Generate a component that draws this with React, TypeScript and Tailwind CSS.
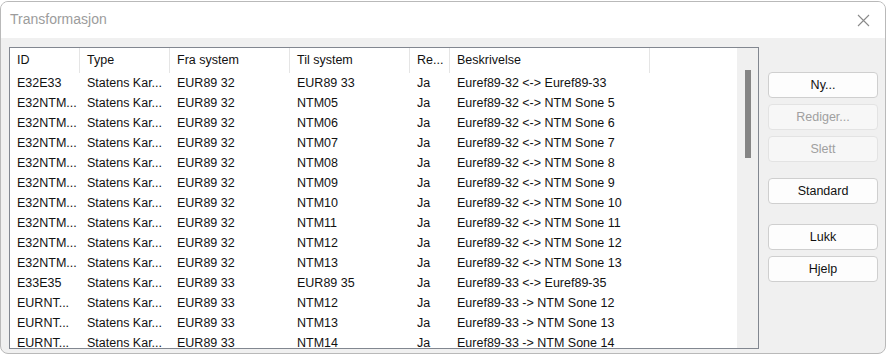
const cols = [
  { key: "id", label: "ID", w: 70 },
  { key: "type", label: "Type", w: 90 },
  { key: "fra", label: "Fra system", w: 120 },
  { key: "til", label: "Til system", w: 120 },
  { key: "rev", label: "Re...", w: 40 },
  { key: "desc", label: "Beskrivelse", w: 200 },
] as const;

type Row = { id: string; type: string; fra: string; til: string; rev: string; desc: string };

const rows: Row[] = [
  { id: "E32E33", type: "Statens Kar...", fra: "EUR89 32", til: "EUR89 33", rev: "Ja", desc: "Euref89-32 <-> Euref89-33" },
  ...[5, 6, 7, 8, 9, 10, 11, 12, 13].map((n) => ({
    id: "E32NTM...",
    type: "Statens Kar...",
    fra: "EUR89 32",
    til: "NTM" + String(n).padStart(2, "0"),
    rev: "Ja",
    desc: "Euref89-32 <-> NTM Sone " + n,
  })),
  { id: "E33E35", type: "Statens Kar...", fra: "EUR89 33", til: "EUR89 35", rev: "Ja", desc: "Euref89-33 <-> Euref89-35" },
  ...[12, 13, 14].map((n) => ({
    id: "EURNT...",
    type: "Statens Kar...",
    fra: "EUR89 33",
    til: "NTM" + n,
    rev: "Ja",
    desc: "Euref89-33 -> NTM Sone " + n,
  })),
];

const Btn = ({ label, disabled, className }: { label: string; disabled?: boolean; className?: string }) => (
  <button
    className={
      "w-[110px] h-[26px] rounded-[4px] border text-[12.5px] leading-none " +
      (disabled
        ? "border-[#e3e3e3] bg-[#f7f7f7] text-[#a0a0a0] "
        : "border-[#cfcfcf] bg-[#fdfdfd] text-[#111] ") +
      (className ?? "")
    }
  >
    {label}
  </button>
);

export default function App() {
  return (
    <div className="w-[886px] h-[355px] bg-white overflow-hidden" style={{ fontFamily: '"Liberation Sans", Arial, sans-serif' }}>
      <div className="mt-[1px] w-[886px] h-[353px] rounded-[8px] border border-[#b9b9b9] overflow-hidden flex flex-col bg-[#f0f0f0]">
        {/* title bar */}
        <div className="h-[36px] shrink-0 bg-white flex items-center justify-between pl-[9px] pr-[15px]">
          <span className="text-[14px] text-[#9c9c9c] -mt-[1px]">Transformasjon</span>
          <svg width="13" height="13" viewBox="0 0 13 13">
            <path d="M1 1 L12 12 M12 1 L1 12" stroke="#8a8a8a" strokeWidth="1.1" fill="none" />
          </svg>
        </div>

        {/* body */}
        <div className="flex-1 flex pl-[8px] pt-[9px]">
          <div className="w-[750px] h-[302px] border border-[#828790] bg-white flex overflow-hidden">
            <div className="flex-1 overflow-hidden text-[12.5px] text-[#111]">
              <div className="h-[25px] flex">
                {cols.map((c) => (
                  <div
                    key={c.key}
                    style={{ width: c.w }}
                    className="shrink-0 h-full pl-[7px] flex items-center border-r border-[#e5e5e5] whitespace-nowrap overflow-hidden"
                  >
                    {c.label}
                  </div>
                ))}
              </div>
              {rows.map((r, i) => (
                <div key={i} className="h-[20px] flex">
                  {cols.map((c) => (
                    <div
                      key={c.key}
                      style={{ width: c.w }}
                      className="shrink-0 h-full pl-[7px] flex items-center whitespace-nowrap overflow-hidden"
                    >
                      {r[c.key]}
                    </div>
                  ))}
                </div>
              ))}
            </div>
            <div className="w-[21px] shrink-0 bg-[#f0f0f0] flex justify-center pt-[22px]">
              <div className="w-[6px] h-[88px] bg-[#858585]" />
            </div>
          </div>

          <div className="ml-[9px] pt-[25px] flex flex-col">
            <Btn label="Ny..." />
            <Btn label="Rediger..." disabled className="mt-[6px]" />
            <Btn label="Slett" disabled className="mt-[6px]" />
            <Btn label="Standard" className="mt-[16px]" />
            <Btn label="Lukk" className="mt-[20px]" />
            <Btn label="Hjelp" className="mt-[6px]" />
          </div>
        </div>
      </div>
    </div>
  );
}
